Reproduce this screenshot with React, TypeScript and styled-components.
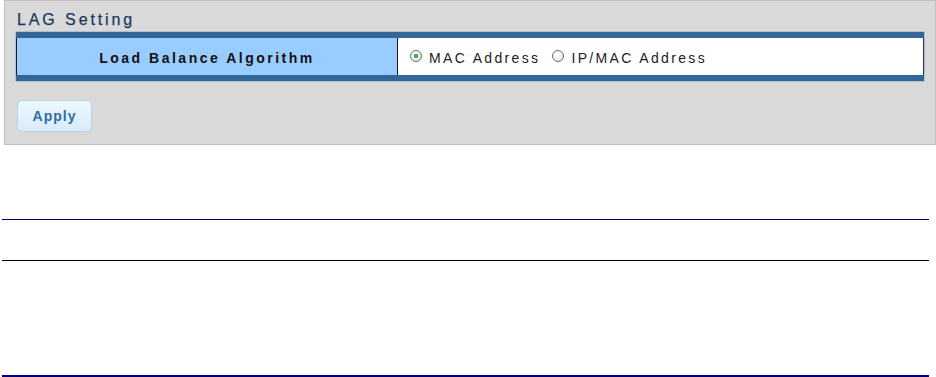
import React from 'react'
import styled, { createGlobalStyle } from 'styled-components'

const GlobalStyle = createGlobalStyle`
  html, body {
    margin: 0;
    padding: 0;
    background: #ffffff;
    font-family: 'Liberation Sans', Arial, sans-serif;
  }
`

const Page = styled.div`
  width: 936px;
  height: 377px;
  overflow: hidden;
`

const Panel = styled.div`
  box-sizing: border-box;
  margin-left: 4px;
  width: 932px;
  background-color: #d9d9d9;
  border: 1px solid #c0c0c0;
  padding: 10px 11px 12px 11px;
`

const Title = styled.div`
  font-size: 16px;
  line-height: 18px;
  letter-spacing: 2.9px;
  color: #1a3a60;
  padding-left: 1px;
  -webkit-text-stroke: 0.25px #1a3a60;
`

const Table = styled.div`
  margin-top: 3px;
  border-top: 6px solid #336699;
  border-bottom: 6px solid #336699;
  box-shadow: 0 0 0 0.5px #8aa4c0;
`

const Row = styled.div`
  display: grid;
  grid-template-columns: 381px 1fr;
  height: 37px;
  border-left: 1px solid #1a1a1a;
  border-right: 1px solid #333333;
`

const LabelCell = styled.div`
  display: flex;
  align-items: center;
  justify-content: center;
  background-color: #99ccff;
  border-right: 1px solid #1a1a1a;
  font-size: 14px;
  font-weight: bold;
  letter-spacing: 2.5px;
  color: #111111;
  padding-top: 2px;
`

const ValueCell = styled.div`
  display: flex;
  align-items: center;
  background-color: #ffffff;
  padding-left: 12px;
  padding-top: 2px;
`

const Option = styled.label`
  display: flex;
  align-items: center;
  font-size: 14px;
  letter-spacing: 2.35px;
  color: #222222;
  margin-right: 12px;
`

const Radio = styled.span<{ checked?: boolean }>`
  position: relative;
  width: 12px;
  height: 12px;
  box-sizing: border-box;
  border-radius: 50%;
  border: 1px solid #707070;
  background: radial-gradient(circle at 40% 35%, #ffffff 0%, #f0f0f0 55%, #d4d4d4 100%);
  margin-right: 7px;
  margin-top: -4px;

  &::after {
    content: '';
    display: ${({ checked }) => (checked ? 'block' : 'none')};
    position: absolute;
    left: 3px;
    top: 3px;
    width: 4px;
    height: 4px;
    border-radius: 50%;
    background: #3cb043;
    box-shadow: 0 0 1px #2c8a33;
  }
`

const ApplyButton = styled.button`
  margin-top: 19px;
  margin-left: 1px;
  width: 75px;
  height: 32px;
  border: 1px solid #b4d4ee;
  border-radius: 5px;
  background: linear-gradient(#eef7fe, #d9ebf9);
  font-family: 'Liberation Sans', Arial, sans-serif;
  font-size: 14px;
  font-weight: bold;
  letter-spacing: 1px;
  color: #2f6da3;
  padding: 0;
  cursor: pointer;
`

const Rules = styled.div`
  margin-left: 2px;
  width: 927px;
  display: flex;
  flex-direction: column;
`

const Rule = styled.div<{ color: string; size: number; gap: number }>`
  margin-top: ${({ gap }) => gap}px;
  height: ${({ size }) => size}px;
  background-color: ${({ color }) => color};
`

export default function App(): JSX.Element {
  return (
    <Page>
      <GlobalStyle />
      <Panel>
        <Title>LAG Setting</Title>
        <Table>
          <Row>
            <LabelCell>Load Balance Algorithm</LabelCell>
            <ValueCell>
              <Option>
                <Radio checked />
                MAC Address
              </Option>
              <Option>
                <Radio />
                IP/MAC Address
              </Option>
            </ValueCell>
          </Row>
        </Table>
        <ApplyButton>Apply</ApplyButton>
      </Panel>
      <Rules>
        <Rule color='#000066' size={1} gap={74} />
        <Rule color='#000000' size={1} gap={40} />
        <Rule color='#000080' size={2} gap={114} />
      </Rules>
    </Page>
  )
}
